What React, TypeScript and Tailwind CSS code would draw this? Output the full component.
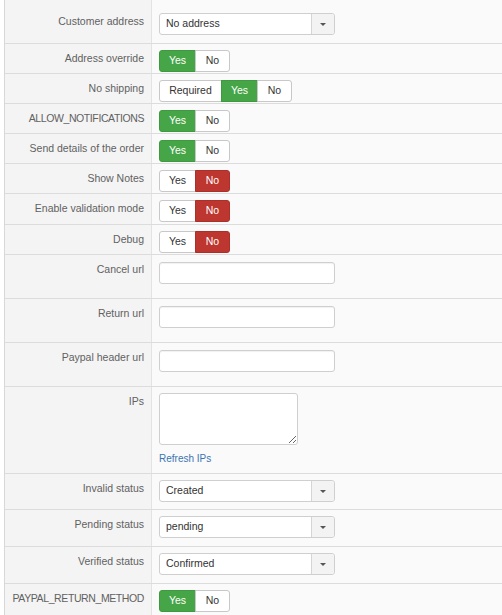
import type { ReactNode } from "react";

type Tone = "green" | "red" | "plain";

const segWidth: Record<string, string> = {
  Yes: "w-[37px]",
  No: "w-[35px]",
  Required: "w-[63px]",
};

const toneClass: Record<Tone, string> = {
  green: "bg-[#46a546] border-[#3f9a3f] text-white",
  red: "bg-[#bd362f] border-[#ab302a] text-white",
  plain: "bg-white border-[#c8c8c8] text-[#333]",
};

function Toggle({ options }: { options: { label: string; tone: Tone }[] }) {
  return (
    <div className="inline-flex">
      {options.map((o, i) => (
        <span
          key={o.label}
          className={`h-[22px] flex items-center justify-center border text-[10.5px] ${segWidth[o.label]} ${toneClass[o.tone]} ${
            i === 0 ? "rounded-l-[3px]" : "-ml-px"
          } ${i === options.length - 1 ? "rounded-r-[3px]" : ""}`}
        >
          {o.label}
        </span>
      ))}
    </div>
  );
}

const yesOn = [
  { label: "Yes", tone: "green" as Tone },
  { label: "No", tone: "plain" as Tone },
];
const noOn = [
  { label: "Yes", tone: "plain" as Tone },
  { label: "No", tone: "red" as Tone },
];

function Select({ value }: { value: string }) {
  return (
    <div className="w-[176px] h-[22px] flex bg-white border border-[#cfcfcf] rounded-[3px] text-[10.5px] text-[#333]">
      <div className="flex-1 flex items-center pl-[6px]">{value}</div>
      <div className="w-[23px] flex items-center justify-center border-l border-[#d5d5d5] bg-[#f3f3f3] rounded-r-[3px]">
        <span className="w-0 h-0 border-l-[3px] border-r-[3px] border-t-[3px] border-l-transparent border-r-transparent border-t-[#555]" />
      </div>
    </div>
  );
}

function TextInput() {
  return (
    <input
      type="text"
      className="w-[176px] h-[22px] bg-white border border-[#cfcfcf] rounded-[3px] shadow-[inset_0_1px_1px_rgba(0,0,0,0.06)] outline-none"
    />
  );
}

function Row({
  label,
  h,
  pt,
  caps,
  children,
}: {
  label?: string;
  h: string;
  pt: string;
  caps?: boolean;
  children?: ReactNode;
}) {
  return (
    <div className={`grid grid-cols-[147px_1fr] border-b border-[#dcdcdc] ${h}`}>
      <div
        className={`bg-[#f4f4f4] border-r border-[#e3e3e3] text-right pr-[7px] pt-[7px] leading-[15px] text-[10.5px] text-[#616161] ${
          caps ? "tracking-[-0.4px]" : ""
        }`}
      >
        {label}
      </div>
      <div className={`bg-[#fafafa] pl-[7px] ${pt}`}>{children}</div>
    </div>
  );
}

export default function App() {
  return (
    <div
      className="w-[502px] h-[615px] overflow-hidden bg-white"
      style={{ fontFamily: '"Liberation Sans", Arial, sans-serif' }}
    >
      <div className="ml-[4px] border-l border-[#d8d8d8]">
        <Row h="h-[7px]" pt="pt-0" />
        <Row label="Customer address" h="h-[37px]" pt="pt-[6px]">
          <Select value="No address" />
        </Row>
        <Row label="Address override" h="h-[30px]" pt="pt-[3px]">
          <Toggle options={yesOn} />
        </Row>
        <Row label="No shipping" h="h-[30px]" pt="pt-[3px]">
          <Toggle
            options={[
              { label: "Required", tone: "plain" },
              { label: "Yes", tone: "green" },
              { label: "No", tone: "plain" },
            ]}
          />
        </Row>
        <Row label="ALLOW_NOTIFICATIONS" caps h="h-[30px]" pt="pt-[3px]">
          <Toggle options={yesOn} />
        </Row>
        <Row label="Send details of the order" h="h-[30px]" pt="pt-[3px]">
          <Toggle options={yesOn} />
        </Row>
        <Row label="Show Notes" h="h-[30px]" pt="pt-[3px]">
          <Toggle options={noOn} />
        </Row>
        <Row label="Enable validation mode" h="h-[31px]" pt="pt-[3px]">
          <Toggle options={noOn} />
        </Row>
        <Row label="Debug" h="h-[30px]" pt="pt-[3px]">
          <Toggle options={noOn} />
        </Row>
        <Row label="Cancel url" h="h-[44px]" pt="pt-[6px]">
          <TextInput />
        </Row>
        <Row label="Return url" h="h-[44px]" pt="pt-[6px]">
          <TextInput />
        </Row>
        <Row label="Paypal header url" h="h-[44px]" pt="pt-[6px]">
          <TextInput />
        </Row>
        <Row label="IPs" h="h-[87px]" pt="pt-[6px]">
          <textarea className="block w-[139px] h-[52px] bg-white border border-[#cfcfcf] rounded-[3px] outline-none resize" />
          <div className="mt-[7px] text-[10px] leading-[14px] text-[#3a75b2]">Refresh IPs</div>
        </Row>
        <Row label="Invalid status" h="h-[36px]" pt="pt-[6px]">
          <Select value="Created" />
        </Row>
        <Row label="Pending status" h="h-[37px]" pt="pt-[6px]">
          <Select value="pending" />
        </Row>
        <Row label="Verified status" h="h-[37px]" pt="pt-[6px]">
          <Select value="Confirmed" />
        </Row>
        <Row label="PAYPAL_RETURN_METHOD" caps h="h-[40px]" pt="pt-[3px]">
          <Toggle options={yesOn} />
        </Row>
      </div>
    </div>
  );
}
